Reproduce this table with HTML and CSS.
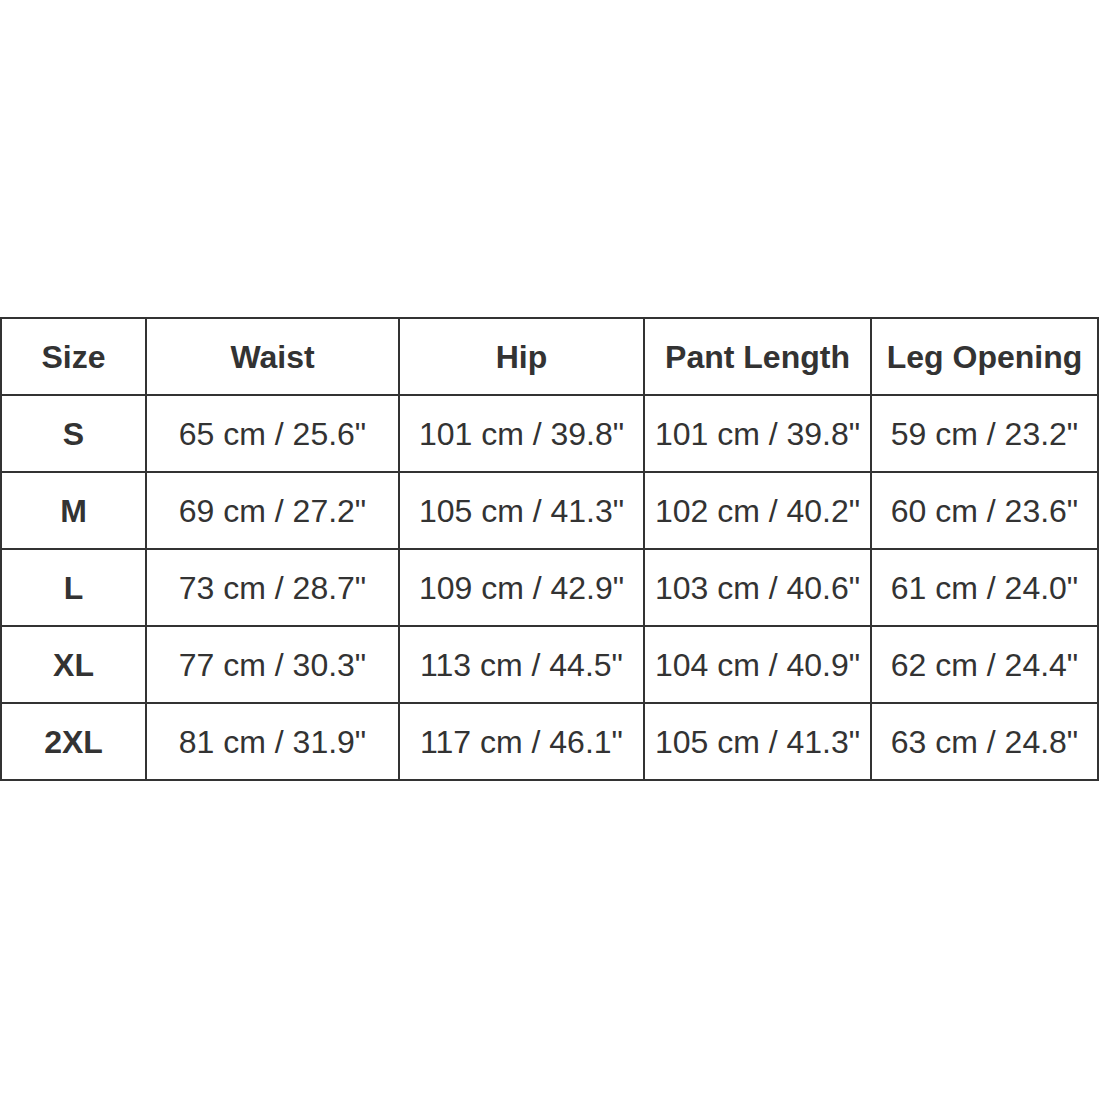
FILE: index.html
```html
<!DOCTYPE html>
<html>
<head>
<meta charset="utf-8">
<link rel="stylesheet" href="styles.css">
</head>
<body>
<table class="size-chart">
  <colgroup>
    <col class="c1"><col class="c2"><col class="c3"><col class="c4"><col class="c5">
  </colgroup>
  <thead>
    <tr><th>Size</th><th>Waist</th><th>Hip</th><th>Pant Length</th><th>Leg Opening</th></tr>
  </thead>
  <tbody>
    <tr><th>S</th><td>65 cm / 25.6"</td><td>101 cm / 39.8"</td><td>101 cm / 39.8"</td><td>59 cm / 23.2"</td></tr>
    <tr><th>M</th><td>69 cm / 27.2"</td><td>105 cm / 41.3"</td><td>102 cm / 40.2"</td><td>60 cm / 23.6"</td></tr>
    <tr><th>L</th><td>73 cm / 28.7"</td><td>109 cm / 42.9"</td><td>103 cm / 40.6"</td><td>61 cm / 24.0"</td></tr>
    <tr><th>XL</th><td>77 cm / 30.3"</td><td>113 cm / 44.5"</td><td>104 cm / 40.9"</td><td>62 cm / 24.4"</td></tr>
    <tr><th>2XL</th><td>81 cm / 31.9"</td><td>117 cm / 46.1"</td><td>105 cm / 41.3"</td><td>63 cm / 24.8"</td></tr>
  </tbody>
</table>
</body>
</html>
```
FILE: styles.css
```css
html, body {
  margin: 0;
  padding: 0;
  background: #fff;
}
body {
  padding-top: 317px;
  font-family: "Liberation Sans", Arial, sans-serif;
  color: #333;
}
.size-chart {
  border-collapse: collapse;
  table-layout: fixed;
  width: 1097px;
}
.c1 { width: 145px; }
.c2 { width: 253px; }
.c3 { width: 245px; }
.c4 { width: 227px; }
.c5 { width: 227px; }
.size-chart th,
.size-chart td {
  border: 2px solid #333;
  height: 75px;
  padding: 0;
  text-align: center;
  vertical-align: middle;
  font-size: 32px;
  white-space: nowrap;
  line-height: 1;
}
.size-chart th {
  font-weight: bold;
}
.size-chart td {
  font-weight: normal;
}
```
